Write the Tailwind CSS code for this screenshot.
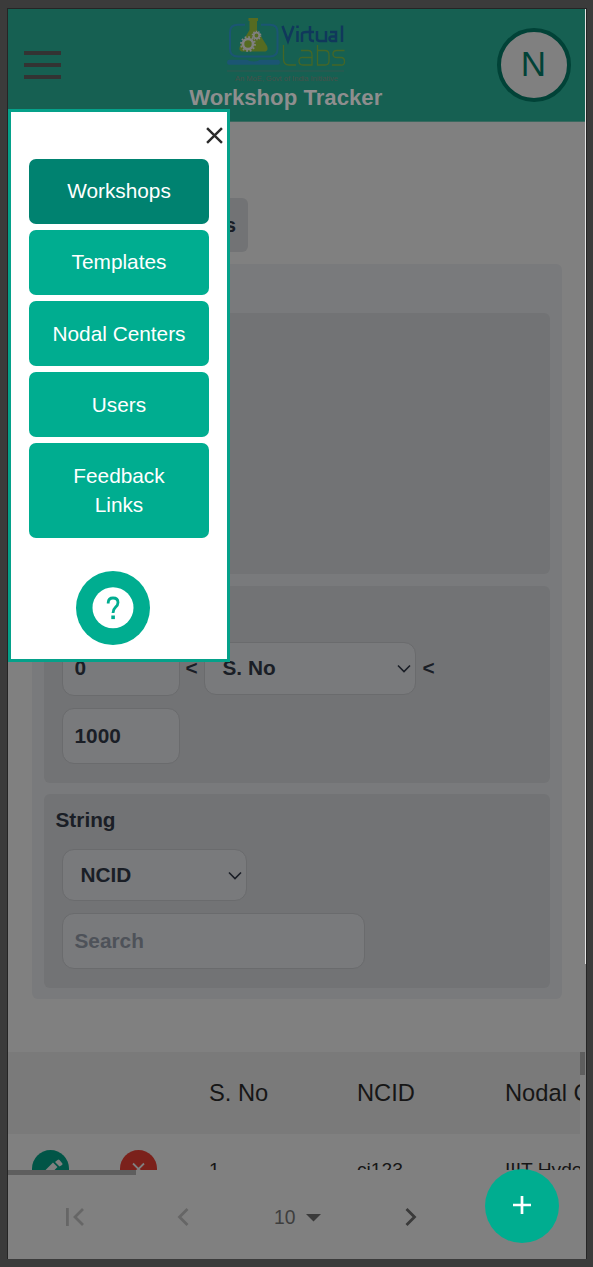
<!DOCTYPE html>
<html lang="en">
<head>
<meta charset="utf-8">
<title>Workshop Tracker</title>
<script src="https://cdn.jsdelivr.net/npm/@tailwindcss/browser@4"></script>
</head>
<body class="w-[593px] h-[1267px] overflow-hidden bg-[#3b3b3b] pl-[7px] pt-2 font-['Liberation_Sans',Arial,sans-serif] text-[20.8px] text-[#1a1e26]">
<div class="relative flex flex-col w-[580px] h-[1251px] border-t border-x border-[#252525] bg-[#808080] overflow-hidden">
  <header class="flex shrink-0 items-center justify-between h-[113px] w-[577px] pl-4 pr-[14.500px] bg-[#166052] border-b border-[#39695f]">
    <button class="flex flex-col gap-[8px] w-[37px]" aria-label="Menu">
      <span class="h-1 w-full bg-[#333]"></span><span class="h-1 w-full bg-[#333]"></span><span class="h-1 w-full bg-[#333]"></span>
    </button>
    <div class="flex flex-col items-center w-[200px] h-full pt-[6px] -mr-[14px]">
      <svg class="shrink-0" width="122" height="68" viewBox="0 0 122 68">
        <path d="M20 9.800H13Q5 9.800 5 17V34Q5 41.500 13 41.500H45Q52.500 41.500 52.500 34V17Q52.500 9.800 45 9.800H36" fill="none" stroke="#1b5573" stroke-width="2"/>
        <path d="M4 44.800H22Q24 46.500 28.500 46.500Q33 46.500 35 44.800H53Q55 44.800 55 47.300T53 49.800H4Q2 49.800 2 47.300T4 44.800Z" fill="#1b5573"/>
        <path d="M23.500 3H33V6H32V15L42 31Q44 36.500 39 36.500H18Q13 36.500 15 31L24.500 15V6H23.500Z" fill="#566b21"/>
        <circle cx="23" cy="29" r="5" fill="none" stroke="#808080" stroke-width="2.600"/>
        <circle cx="23" cy="29" r="7" fill="none" stroke="#808080" stroke-width="1.800" stroke-dasharray="1.800 1.870"/>
        <circle cx="31.500" cy="20.500" r="2.800" fill="none" stroke="#808080" stroke-width="1.800"/>
        <circle cx="31.500" cy="20.500" r="4.200" fill="none" stroke="#808080" stroke-width="1.300" stroke-dasharray="1.400 1.240"/>
        <path d="M57.500 11L63 26L68.500 11M72.500 16V27M72.500 10.500V13M77 27V19Q77 17 82 17M85 11V23.500Q85 26 89 26M82 17H89M92 16V23.500Q92 26 95 26H101V16M105 17H111V26H107Q104.500 26 104.500 23.800Q104.500 21.500 107 21.500H111M117 10.500V27" fill="none" stroke="#10385b" stroke-width="2.500"/>
        <path d="M58.500 30V44Q58.500 50 64 50H71M76 35.500H83Q87 35.500 87 40V50H78Q74 50 74 46T78 42.500H87M92.500 30V50H100Q104 50 104 46V40Q104 35.500 100 35.500H92.500M119.500 35.500H112Q108 35.500 108 39T112 42.500H116Q119.500 42.500 119.500 46.500T116 50H107" fill="none" stroke="#446627" stroke-width="1.300"/>
        <path d="M2 56H119" stroke="#33564f" stroke-width="1.200"/>
        <text x="10" y="65.500" textLength="103" lengthAdjust="spacingAndGlyphs" font-family="Liberation Sans" font-size="7" fill="#46514a">An MoE, Govt of India Initiative</text>
      </svg>
      <h1 class="mt-px font-bold text-[22.2px] leading-[28px] text-[#8e8e8e] whitespace-nowrap">Workshop Tracker</h1>
    </div>
    <div class="flex items-center justify-center size-[74px] rounded-full border-4 border-[#014237] bg-[#808080] text-[35px] text-[#014237] pb-px">N</div>
  </header>

  <main class="flex flex-col shrink-0 w-[577px] px-6 pt-[76px] h-[930px] font-bold">
    <button class="flex items-center justify-end w-[216px] h-[54px] pr-3 rounded-md bg-[#727375]">Filters</button>
    <section class="flex flex-col mt-3 w-[530px] h-[735px] rounded-md bg-[#797a7c] pl-[11.500px] pr-3 pt-[49px]">
      <div class="h-[261px] shrink-0 rounded-md bg-[#727375]"></div>
      <div class="mt-3 h-[197px] shrink-0 rounded-md bg-[#727375] pl-[18px] pt-[55px]">
        <div class="flex items-center h-[55px]">
          <div class="flex items-center w-[118px] h-[55px] pl-3 rounded-xl border-[1.5px] border-[#6a6b6d] bg-[#797a7c] pb-[2px]">0</div>
          <span class="w-[24px] text-center pb-[2px]">&lt;</span>
          <div class="flex items-center justify-between w-[212px] h-[53px] -mt-px pl-[18px] pr-1 rounded-xl border-[1.5px] border-[#6a6b6d] bg-[#797a7c]">S. No
            <svg width="14" height="9" viewBox="0 0 14 9" fill="none" stroke="#1a1e26" stroke-width="1.600"><path d="M1 1.500L7 7.500L13 1.500"/></svg></div>
          <span class="w-[26px] text-center pb-[2px]">&lt;</span>
        </div>
        <div class="flex items-center mt-3 w-[118px] h-[56px] pl-3 rounded-xl border-[1.5px] border-[#6a6b6d] bg-[#797a7c]">1000</div>
      </div>
      <div class="flex flex-col mt-[11px] h-[194px] shrink-0 rounded-md bg-[#727375] pl-3 pt-[10px]">
        <h2 class="leading-[31px]">String</h2>
        <div class="flex items-center justify-between mt-[14px] ml-[6px] w-[185px] h-[52px] pl-[18px] pr-1 rounded-xl border-[1.5px] border-[#6a6b6d] bg-[#797a7c]">NCID
          <svg width="14" height="9" viewBox="0 0 14 9" fill="none" stroke="#1a1e26" stroke-width="1.600"><path d="M1 1.500L7 7.500L13 1.500"/></svg></div>
        <div class="flex items-center mt-3 ml-[6px] w-[303.500px] h-[56px] pl-3 rounded-xl border-[1.5px] border-[#6a6b6d] bg-[#797a7c] text-[#4e5259]">Search</div>
      </div>
    </section>
  </main>

  <section class="flex shrink-0 h-[118px] w-[577px] text-[#161616]">
    <div class="w-[572px] overflow-hidden">
      <div class="flex items-center h-[82px] bg-[#7a7a7a] pl-[201px] pt-[2px] text-[23.700px] whitespace-nowrap">
        <span class="w-[148px] shrink-0">S. No</span><span class="w-[148px] shrink-0">NCID</span><span class="shrink-0">Nodal Center</span>
      </div>
      <div class="flex items-start h-[36px] overflow-hidden pl-[23.500px] text-[19.200px] whitespace-nowrap">
        <svg class="mt-4 shrink-0" width="37" height="37" viewBox="0 0 37 37"><circle cx="18.500" cy="18.500" r="18.500" fill="#015547"/><path fill="#808080" d="M8 25.500V30h4.500L25.500 17L21 12.500ZM30 15q1-1 0-2L27.500 10q-1-1-2 0L23 12l4.500 4.500Z"/></svg>
        <svg class="mt-4 ml-[51.500px] shrink-0" width="37" height="37" viewBox="0 0 37 37"><circle cx="18.500" cy="18.500" r="18.500" fill="#7b211b"/><path stroke="#808080" stroke-width="1.800" d="M13 13.500L24 24.500M24 13.500L13 24.500"/></svg>
        <span class="w-[148px] shrink-0 ml-[52px] pt-[22px]">1</span><span class="w-[148px] shrink-0 pt-[22px]">ci123</span><span class="shrink-0 pt-[22px]">IIIT Hyderabad</span>
      </div>
    </div>
    <div class="w-[5px] h-[23px] bg-[#5e5e5e]"></div>
  </section>
  <div class="shrink-0 h-[5px] w-[128px] bg-[#5e5e5e]"></div>

  <footer class="flex shrink-0 items-center h-[84px] pl-[58px] text-[19.300px] text-[#3e3e3e]">
    <svg width="18" height="18" viewBox="0 0 18 18" fill="none" stroke="#666" stroke-width="2.800"><path d="M1.400 0V18M17 1L9 9L17 17"/></svg>
    <svg class="ml-[93px]" width="12" height="18" viewBox="0 0 12 18" fill="none" stroke="#666" stroke-width="2.800"><path d="M10.500 1L2.500 9L10.500 17"/></svg>
    <span class="ml-[85px] w-[22px] pt-[2px]">10</span>
    <svg class="ml-[10px] mt-[2px]" width="15" height="8" viewBox="0 0 15 8"><path d="M0 0H15L7.500 7.500Z" fill="#3a3a3a"/></svg>
    <svg class="ml-[84px]" width="12" height="18" viewBox="0 0 12 18" fill="none" stroke="#3a3a3a" stroke-width="2.800"><path d="M1.500 1L9.500 9L1.500 17"/></svg>
  </footer>

  <div class="absolute right-0 top-0 w-px h-[955px] bg-[#e4e4e4]"></div>

  <aside class="absolute left-0 top-[100px] w-[222px] h-[553px] border-[3px] border-[#05a18a] bg-white px-[18px] pt-[47px] text-white">
    <svg class="absolute top-[15px] right-[4px]" width="17" height="17" viewBox="0 0 16 16" stroke="#2b2b2b" stroke-width="2.300" fill="none"><path d="M1 1L15 15M15 1L1 15"/></svg>
    <nav class="flex flex-col gap-[6px] w-[180px] text-center leading-[29px]">
      <a class="flex items-center justify-center h-[65px] rounded-[7px] bg-[#008270] pb-[2px]">Workshops</a>
      <a class="flex items-center justify-center h-[65px] rounded-[7px] bg-[#00ad90] pb-[2px]">Templates</a>
      <a class="flex items-center justify-center h-[65px] rounded-[7px] bg-[#00ad90] pb-px">Nodal Centers</a>
      <a class="flex items-center justify-center h-[65px] rounded-[7px] bg-[#00ad90] pb-px">Users</a>
      <a class="flex items-center justify-center h-[95px] rounded-[7px] bg-[#00ad90] px-8 pb-px">Feedback Links</a>
    </nav>
    <div class="flex items-center justify-center mt-[33px] ml-[47px] size-[74px] rounded-full bg-[#00ad90]">
      <svg width="42" height="42" viewBox="0 0 42 42"><circle cx="21" cy="20.700" r="20.500" fill="#fff"/><path d="M16.200 16.500V15.500Q16.500 11 21 11Q26 11 26 15.500Q26 18 23.500 20.300Q21 22.500 21 26" fill="none" stroke="#00ad90" stroke-width="2.800"/><path d="M19.300 28.500h3.600v3.600h-3.600Z" fill="#00ad90"/></svg>
    </div>
  </aside>

  <button class="absolute left-[477px] top-[1160px] flex items-center justify-center size-[74px] rounded-full bg-[#00ad90]" aria-label="Add">
    <svg class="-mt-[2px] -ml-px" width="18" height="18" viewBox="0 0 18 18" stroke="#fff" stroke-width="2.700"><path d="M9 0V18M0 9H18"/></svg>
  </button>
</div>
</body>
</html>
